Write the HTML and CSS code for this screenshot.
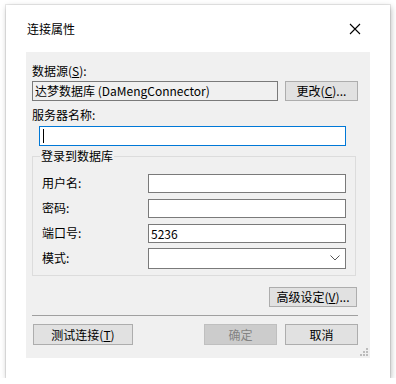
FILE: index.html
```html
<!DOCTYPE html>
<html lang="zh-CN">
<head>
  <meta charset="UTF-8" />
  <title>连接属性</title>
  <link rel="stylesheet" href="styles.css">
</head>
<body>
  <div class="dialog">
    <div class="titlebar">
      <span class="title">连接属性</span>
      <svg class="close" width="12" height="12" viewBox="0 0 12 12">
        <path d="M1 1 L11 11 M11 1 L1 11" stroke="#000" stroke-width="1.1" fill="none" />
      </svg>
    </div>

    <div class="panel">
      <div class="lbl">数据源(<u>S</u>):</div>
      <div class="source-row">
        <div class="field readonly">达梦数据库 (DaMengConnector)</div>
        <button class="btn change">更改(<u>C</u>)...</button>
      </div>

      <div class="lbl server-lbl">服务器名称:</div>
      <div class="field focus"><span class="caret"></span></div>

      <fieldset class="group">
        <legend>登录到数据库</legend>
        <div class="row">
          <span>用户名:</span>
          <div class="field"></div>
        </div>
        <div class="row">
          <span>密码:</span>
          <div class="field"></div>
        </div>
        <div class="row">
          <span>端口号:</span>
          <div class="field">5236</div>
        </div>
        <div class="row">
          <span>模式:</span>
          <div class="field select">
            <svg width="10" height="6" viewBox="0 0 10 6">
              <path d="M0.5 0.5 L5 5 L9.5 0.5" stroke="#555" stroke-width="1" fill="none" />
            </svg>
          </div>
        </div>
      </fieldset>

      <div class="adv-row">
        <button class="btn adv">高级设定(<u>V</u>)...</button>
      </div>

      <div class="sep"></div>

      <div class="actions">
        <button class="btn test">测试连接(<u>T</u>)</button>
        <button class="btn ok" disabled>确定</button>
        <button class="btn cancel">取消</button>
      </div>

      <svg class="grip" width="8" height="8" viewBox="0 0 8 8">
        <rect x="6" y="0" width="2" height="2" fill="#bcbcbc" />
        <rect x="3" y="3" width="2" height="2" fill="#bcbcbc" />
        <rect x="6" y="3" width="2" height="2" fill="#bcbcbc" />
        <rect x="0" y="6" width="2" height="2" fill="#bcbcbc" />
        <rect x="3" y="6" width="2" height="2" fill="#bcbcbc" />
        <rect x="6" y="6" width="2" height="2" fill="#bcbcbc" />
      </svg>
    </div>
  </div>
</body>
</html>
```

FILE: styles.css
```css
* {
  box-sizing: border-box;
  margin: 0;
  padding: 0;
}

body {
  background: #fff;
  font-family: "Noto Sans CJK SC", "Noto Sans", sans-serif;
  font-size: 12px;
  color: #000;
}

.dialog {
  width: 384px;
  height: 373px;
  margin: 5px 0 0 6px;
  background: #fff;
  box-shadow: 0 0 0 1px rgba(0, 0, 0, 0.08), 1px 2px 6px rgba(0, 0, 0, 0.28);
}

.titlebar {
  height: 47px;
  display: flex;
  align-items: center;
  justify-content: space-between;
  padding: 0 29px 0 21px;
}

.title {
  line-height: 16px;
  margin-top: 1px;
}

.close {
  margin-top: 1px;
}

.panel {
  position: relative;
  width: 344px;
  height: 306px;
  margin-left: 20px;
  background: #f0f0f0;
  padding: 11px 12px 0 6px;
}

.lbl {
  line-height: 16px;
  height: 16px;
}

.source-row {
  display: flex;
  margin-top: 2px;
  gap: 7px;
}

.field {
  height: 20px;
  background: #fff;
  border: 1px solid #7a7a7a;
  line-height: 18px;
  padding-left: 2px;
  font-size: 12px;
}

.field.readonly {
  width: 246px;
  background: #f0f0f0;
}

.server-lbl {
  margin-top: 6px;
}

.field.focus {
  width: 307px;
  margin: 3px 0 0 7px;
  border-color: #0078d7;
  display: flex;
  align-items: center;
}

.caret {
  width: 1px;
  height: 14px;
  background: #000;
  margin-left: 1px;
}

.btn {
  height: 20px;
  background: #e1e1e1;
  border: 1px solid #adadad;
  font-family: "Noto Sans CJK SC", "Noto Sans", sans-serif;
  font-size: 12px;
  color: #000;
  line-height: 18px;
}

.change {
  width: 73px;
}

.group {
  width: 324px;
  margin-top: 2px;
  border: 1px solid #dcdcdc;
  padding: 9px 9px 7px 9px;
}

.group legend {
  margin-left: -2px;
  padding: 0 1px;
  line-height: 16px;
}

.row {
  display: flex;
  align-items: center;
  justify-content: space-between;
  height: 20px;
  margin-bottom: 5px;
}

.row:last-child {
  margin-bottom: 0;
}

.row span {
  line-height: 16px;
}

.row .field {
  width: 198px;
  height: 19px;
  line-height: 17px;
}

.row .select {
  height: 21px;
  display: flex;
  align-items: center;
  justify-content: flex-end;
  padding-right: 5px;
}

.adv-row {
  display: flex;
  justify-content: flex-end;
  margin-top: 11px;
  padding-right: 1px;
}

.adv {
  width: 88px;
}

.sep {
  height: 1px;
  background: #a0a0a0;
  margin-top: 8px;
}

.actions {
  display: flex;
  margin-top: 8px;
  padding-left: 1px;
}

.actions .btn {
  height: 21px;
  width: 73px;
}

.test {
  width: 100px !important;
  margin-right: 71px;
}

.ok {
  margin-right: 8px;
}

.ok:disabled {
  background: #cccccc;
  border-color: #bfbfbf;
  color: #838383;
}

.grip {
  position: absolute;
  right: 2px;
  bottom: 2px;
}
```
